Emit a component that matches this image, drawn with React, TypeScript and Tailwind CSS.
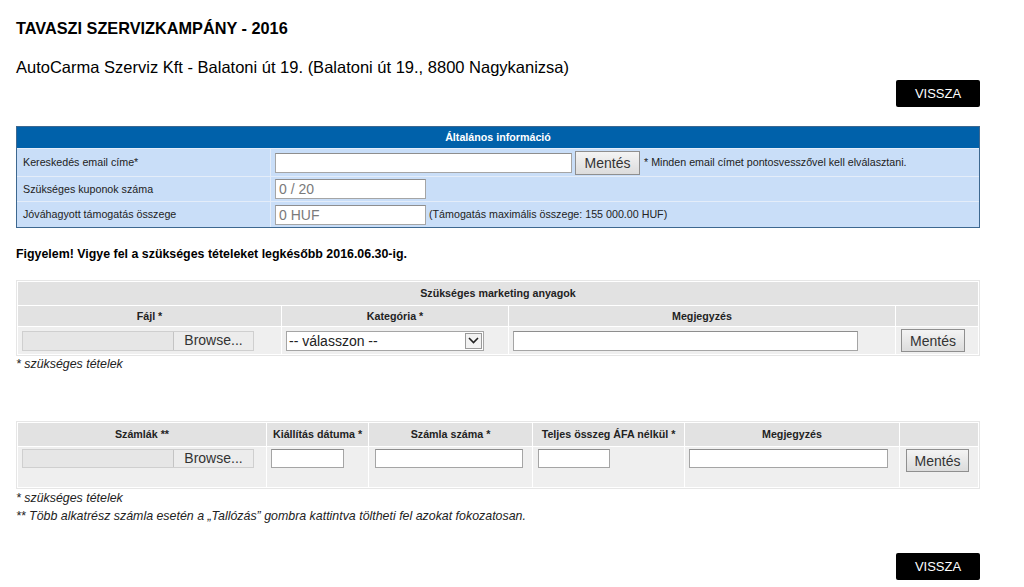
import React from 'react';

const font = { fontFamily: '"Liberation Sans", Arial, sans-serif' };

const BackButton = () => (
  <button className="self-end w-[84px] h-[27px] bg-black rounded-[2px] text-white text-[13px] leading-none">
    VISSZA
  </button>
);

const TextBox = ({ w, value, h = 'h-[20px]' }: { w: string; value?: string; h?: string }) => (
  <div
    className={`${w} ${h} bg-white border border-[#a5a5a5] border-t-[#8e8e8e] flex items-center pl-[3px] text-[14px] text-[#7a7a7a] leading-none`}
  >
    {value}
  </div>
);

const SaveButton = ({ w, h }: { w: string; h: string }) => (
  <button
    className={`${w} ${h} border border-[#8f8f8f] bg-gradient-to-b from-[#f4f4f4] to-[#dcdcdc] text-[14px] text-[#333] leading-none`}
  >
    Mentés
  </button>
);

const FileBox = ({ h = 'h-[20px]' }: { h?: string }) => (
  <div className={`w-[232px] ${h} bg-[#e6e6e6] border border-[#cfcfcf] flex justify-end`}>
    <div className="w-[80px] h-full bg-[#ececec] border-l border-[#c4c4c4] flex items-center justify-center text-[14px] text-[#333]">
      Browse...
    </div>
  </div>
);

const Th = ({ children, className = '' }: { children?: React.ReactNode; className?: string }) => (
  <div className={`bg-[#e2e2e2] flex items-center justify-center text-[10.7px] font-bold text-[#222] ${className}`}>
    {children}
  </div>
);

const Td = ({ children, className = '' }: { children?: React.ReactNode; className?: string }) => (
  <div className={`bg-[#efefef] flex ${className}`}>{children}</div>
);

const InfoRow = ({ label, h, children }: { label: string; h: string; children: React.ReactNode }) => (
  <>
    <div className={`${h} bg-[#c9def8] flex items-center pl-[6px] text-[10.7px] text-[#222]`}>{label}</div>
    <div className={`${h} bg-[#c9def8] flex items-center pl-[4px] gap-[3px]`}>{children}</div>
  </>
);

export default function App() {
  return (
    <div className="w-[1024px] h-[587px] bg-white overflow-hidden" style={font}>
      <div className="w-[964px] ml-4 flex flex-col text-[#111]">
        <h1 className="mt-[18px] h-[20px] text-[16.3px] leading-5 font-bold text-black">
          TAVASZI SZERVIZKAMPÁNY - 2016
        </h1>
        <p className="mt-[19px] text-[16.5px] leading-5 text-black">
          AutoCarma Szerviz Kft - Balatoni út 19. (Balatoni út 19., 8800 Nagykanizsa)
        </p>
        <div className="mt-[3px] flex flex-col">
          <BackButton />
        </div>

        {/* Általános információ */}
        <div className="mt-[19px] border border-[#3d6890] bg-[#e4edf9] grid grid-cols-[253px_1fr] gap-px">
          <div className="col-span-2 h-[21px] bg-[#0061aa] flex items-center justify-center text-[10.7px] font-bold text-white">
            Általános információ
          </div>
          <InfoRow label="Kereskedés email címe*" h="h-[27px]">
            <TextBox w="w-[297px]" />
            <SaveButton w="w-[65px]" h="h-[24px]" />
            <span className="ml-[1px] text-[10.7px] text-[#222]">* Minden email címet pontosvesszővel kell elválasztani.</span>
          </InfoRow>
          <InfoRow label="Szükséges kuponok száma" h="h-[24px]">
            <TextBox w="w-[151px]" value="0 / 20" />
          </InfoRow>
          <InfoRow label="Jóváhagyott támogatás összege" h="h-[25px]">
            <TextBox w="w-[151px]" value="0 HUF" />
            <span className="text-[10.7px] text-[#222]">(Támogatás maximális összege: 155 000.00 HUF)</span>
          </InfoRow>
        </div>

        <p className="mt-[18px] text-[12.4px] leading-4 font-bold text-black">
          Figyelem! Vigye fel a szükséges tételeket legkésőbb 2016.06.30-ig.
        </p>

        {/* Marketing anyagok */}
        <div className="mt-[18px] border border-[#e6e6e6] p-px bg-white grid grid-cols-[263px_226px_1fr_82px] gap-px">
          <Th className="col-span-4 h-[23px]">Szükséges marketing anyagok</Th>
          <Th className="h-[20px]">Fájl *</Th>
          <Th className="h-[20px]">Kategória *</Th>
          <Th className="h-[20px]">Megjegyzés</Th>
          <Th className="h-[20px]" />
          <Td className="h-[27px] items-center pl-[4px]">
            <FileBox />
          </Td>
          <Td className="h-[27px] items-center pl-[4px]">
            <div className="w-[198px] h-[20px] bg-white border border-[#a5a5a5] flex items-center">
              <span className="flex-1 pl-[2px] text-[14px] leading-none text-[#222]">-- válasszon --</span>
              <span className="w-[17px] h-[16px] mr-px border border-[#9a9a9a] bg-[#f2f2f2] flex items-center justify-center">
                <svg width="11" height="7" viewBox="0 0 11 7">
                  <path d="M1 1l4.5 4.5L10 1" fill="none" stroke="#222" strokeWidth="1.6" />
                </svg>
              </span>
            </div>
          </Td>
          <Td className="h-[27px] items-center pl-[4px]">
            <TextBox w="w-[345px]" />
          </Td>
          <Td className="h-[27px] items-center pl-[5px]">
            <SaveButton w="w-[64px]" h="h-[23px]" />
          </Td>
        </div>

        <p className="mt-px text-[12.4px] leading-[15px] italic text-[#222]">* szükséges tételek</p>

        {/* Számlák */}
        <div className="mt-[49px] border border-[#e6e6e6] p-px bg-white grid grid-cols-[248px_101px_163px_151px_1fr_78px] gap-px">
          <Th className="h-[23px]">Számlák **</Th>
          <Th className="h-[23px]">Kiállítás dátuma *</Th>
          <Th className="h-[23px]">Számla száma *</Th>
          <Th className="h-[23px]">Teljes összeg ÁFA nélkül *</Th>
          <Th className="h-[23px]">Megjegyzés</Th>
          <Th className="h-[23px]" />
          <Td className="h-[40px] pt-[2px] pl-[4px]">
            <FileBox h="h-[19px]" />
          </Td>
          <Td className="h-[40px] pt-[2px] pl-[4px]">
            <TextBox w="w-[73px]" h="h-[19px]" />
          </Td>
          <Td className="h-[40px] pt-[2px] pl-[6px]">
            <TextBox w="w-[148px]" h="h-[19px]" />
          </Td>
          <Td className="h-[40px] pt-[2px] pl-[5px]">
            <TextBox w="w-[72px]" h="h-[19px]" />
          </Td>
          <Td className="h-[40px] pt-[2px] pl-[4px]">
            <TextBox w="w-[199px]" h="h-[19px]" />
          </Td>
          <Td className="h-[40px] pt-[2px] pl-[6px]">
            <SaveButton w="w-[63px]" h="h-[23px]" />
          </Td>
        </div>

        <div className="mt-0 text-[12.4px] leading-[18px] italic text-[#222]">
          <p>* szükséges tételek</p>
          <p>** Több alkatrész számla esetén a „Tallózás” gombra kattintva töltheti fel azokat fokozatosan.</p>
        </div>

        <div className="mt-[28px] flex flex-col">
          <BackButton />
        </div>
      </div>
    </div>
  );
}
